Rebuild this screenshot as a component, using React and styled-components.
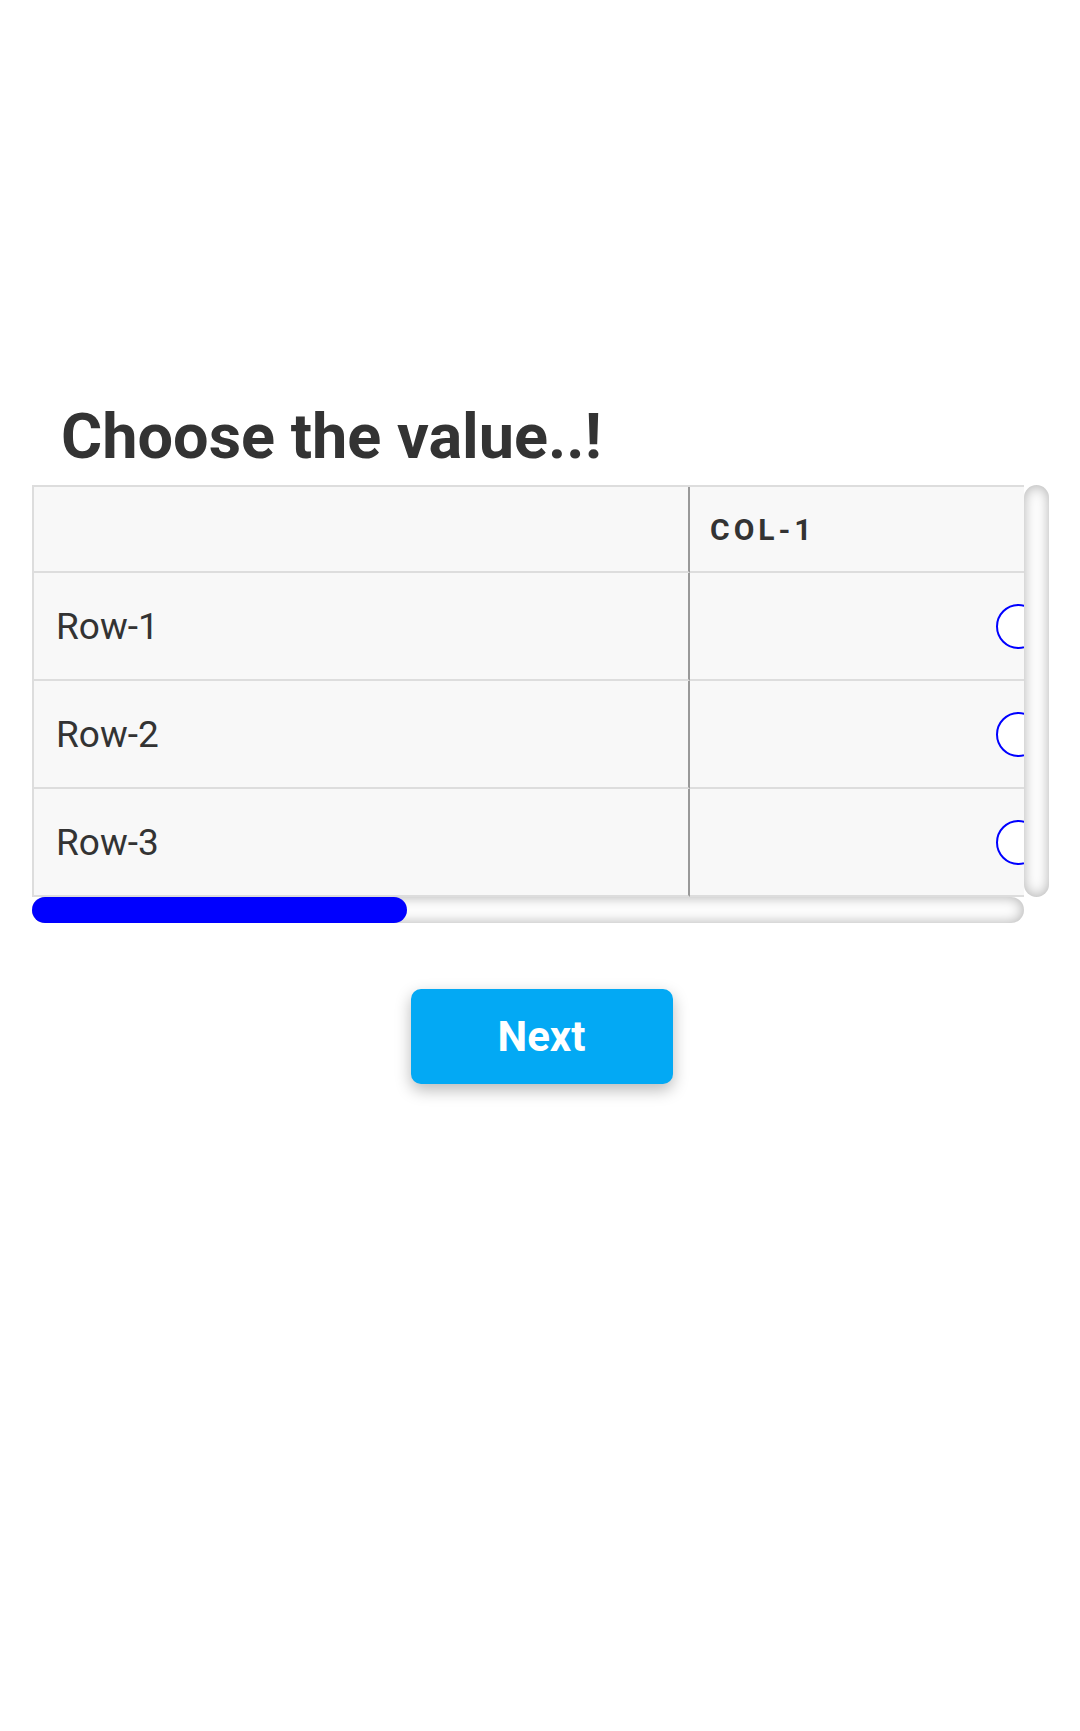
import styled, { createGlobalStyle } from "styled-components";

const GlobalStyle = createGlobalStyle`
  html, body {
    margin: 0;
    padding: 0;
    background: #ffffff;
    font-family: Roboto, "Noto Sans", "Liberation Sans", sans-serif;
  }
`;

const COL_WIDTH = 656;
const VIEW_WIDTH = 992;

const Page = styled.div`
  padding: 398px 31px 0 32px;
  min-height: 1731px;
  box-sizing: border-box;
`;

const Title = styled.h2`
  margin: 0 0 10px;
  padding-left: 29px;
  font-size: 63px;
  line-height: 77px;
  font-weight: 700;
  color: #333333;
`;

const ScrollFrame = styled.div`
  display: grid;
  grid-template-columns: ${VIEW_WIDTH}px 25px;
  grid-template-rows: auto 26px;
`;

const Viewport = styled.div`
  overflow: hidden;
`;

const VTrack = styled.div`
  border-radius: 13px;
  box-shadow: inset 0 0 14px rgba(0, 0, 0, 0.32);
`;

const HTrack = styled.div`
  border-radius: 13px;
  box-shadow: inset 0 0 14px rgba(0, 0, 0, 0.32);
  display: flex;
`;

const HThumb = styled.div`
  background: #0000ff;
  border-radius: 13px;
  height: 100%;
`;

const Table = styled.table`
  border-collapse: separate;
  border-spacing: 0;
  background: #f8f8f8;
  border-top: 2px solid #dddddd;
  border-left: 2px solid #dddddd;
  table-layout: fixed;
`;

const HeadCell = styled.th`
  width: ${COL_WIDTH}px;
  height: 86px;
  padding: 0 20px;
  box-sizing: border-box;
  text-align: left;
  font-size: 30px;
  font-weight: 700;
  letter-spacing: 4px;
  text-transform: uppercase;
  color: #333333;
  border-bottom: 2px solid #dddddd;
  border-right: ${(p) => (p.$first ? "2px solid #999999" : "none")};
`;

const Cell = styled.td`
  height: 106px;
  padding: 0 22px;
  font-size: 37px;
  color: #333333;
  border-bottom: 2px solid #dddddd;
  border-right: ${(p) => (p.$first ? "2px solid #999999" : "none")};
  text-align: ${(p) => (p.$first ? "left" : "center")};
  vertical-align: middle;
`;

const Radio = styled.span`
  display: inline-block;
  width: 45px;
  height: 45px;
  box-sizing: border-box;
  border: 2px solid #0000ff;
  border-radius: 50%;
  background: #ffffff;
  vertical-align: middle;
  cursor: pointer;
`;

const ButtonRow = styled.div`
  display: flex;
  justify-content: center;
  margin-top: 66px;
  padding-left: 2px;
`;

const NextButton = styled.button`
  width: 262px;
  height: 95px;
  border: none;
  border-radius: 10px;
  background: #03a9f4;
  color: #ffffff;
  font-family: Roboto, "Noto Sans", "Liberation Sans", sans-serif;
  font-size: 42px;
  font-weight: 700;
  box-shadow: 0 6px 16px rgba(0, 0, 0, 0.28);
  cursor: pointer;
`;

const columns = ["Col-1", "Col-2", "Col-3"];
const rows = ["Row-1", "Row-2", "Row-3"];

const App = () => {
  const contentWidth = 2 + COL_WIDTH * (columns.length + 1);
  const thumbPct = (VIEW_WIDTH / contentWidth) * 100;

  return (
    <Page>
      <GlobalStyle />
      <Title>Choose the value..!</Title>
      <ScrollFrame>
        <Viewport>
          <Table style={{ width: contentWidth }}>
            <thead>
              <tr>
                <HeadCell $first />
                {columns.map((c) => (
                  <HeadCell key={c}>{c}</HeadCell>
                ))}
              </tr>
            </thead>
            <tbody>
              {rows.map((r) => (
                <tr key={r}>
                  <Cell $first>{r}</Cell>
                  {columns.map((c) => (
                    <Cell key={c}>
                      <Radio />
                    </Cell>
                  ))}
                </tr>
              ))}
            </tbody>
          </Table>
        </Viewport>
        <VTrack />
        <HTrack>
          <HThumb style={{ width: `${thumbPct}%` }} />
        </HTrack>
      </ScrollFrame>
      <ButtonRow>
        <NextButton>Next</NextButton>
      </ButtonRow>
    </Page>
  );
};

export default App;
